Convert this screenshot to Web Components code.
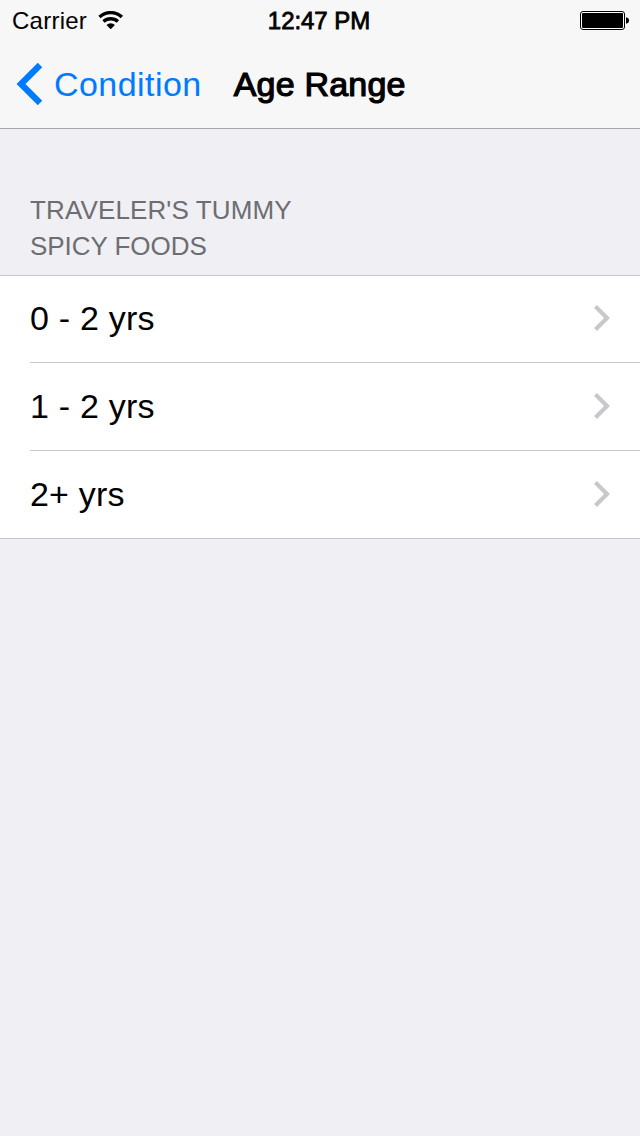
<!DOCTYPE html>
<html lang="en">
<head>
<meta charset="utf-8">
<title>Age Range</title>
<style>
  body {
    margin: 0;
    min-height: 100vh;
    background: #efeff4;
    color: #000;
    font-family: "Liberation Sans", Arial, sans-serif;
  }
  .condition {
    letter-spacing: 0.13px;
  }
  .cause {
    letter-spacing: -0.05px;
  }
</style>
</head>
<body>
  <status-bar carrier="Carrier" time="12:47 PM"></status-bar>
  <nav-bar back="Condition">Age Range</nav-bar>
  <table-section>
    <span slot="header"><span class="condition">TRAVELER'S TUMMY</span><br><span class="cause">SPICY FOODS</span></span>
    <table-row>0 - 2 yrs</table-row>
    <table-row>1 - 2 yrs</table-row>
    <table-row>2+ yrs</table-row>
  </table-section>

<script>
class StatusBar extends HTMLElement {
  connectedCallback() {
    this.attachShadow({ mode: 'open' });
    this.shadowRoot.innerHTML = `
      <style>
        :host {
          display: grid;
          grid-template-columns: 1fr auto 1fr;
          align-items: center;
          height: 40px;
          box-sizing: border-box;
          padding: 2px 11px 0 12px;
          background: #f7f7f7;
          font-size: 24px;
          line-height: 38px;
        }
        .left {
          display: flex;
          align-items: center;
          gap: 11px;
          letter-spacing: 0.25px;
        }
        .time {
          margin-right: 3px;
          letter-spacing: -0.05px;
          -webkit-text-stroke: 0.8px #000;
        }
        .battery {
          justify-self: end;
        }
        svg {
          display: block;
        }
      </style>
      <div class="left">
        <span>${this.getAttribute('carrier')}</span>
        <svg width="26" height="20" viewBox="0 0 26 20">
          <g fill="none" stroke="#000" stroke-width="3.400">
            <path d="M1.500 6a16.500 16.500 0 0 1 22.400 0"/>
            <path d="M5.500 10.500a10.600 10.600 0 0 1 14.400 0"/>
          </g>
          <path d="M8.500 14a6.200 6.200 0 0 1 8.400 0l-4.200 4.200z"/>
        </svg>
      </div>
      <span class="time">${this.getAttribute('time')}</span>
      <svg class="battery" width="49" height="20" viewBox="0 0 49 20">
        <rect x=".5" y=".5" width="44" height="18" rx="2.500" fill="#fff" stroke="#000"/>
        <rect x="2" y="2" width="41" height="15" rx="1"/>
        <path d="M46 6.200c2 .4 3 1.500 3 3.300s-1 2.900-3 3.300z"/>
      </svg>
    `;
  }
}
customElements.define('status-bar', StatusBar);

class NavBar extends HTMLElement {
  connectedCallback() {
    this.attachShadow({ mode: 'open' });
    this.shadowRoot.innerHTML = `
      <style>
        :host {
          display: flex;
          align-items: center;
          height: 89px;
          box-sizing: border-box;
          padding: 0 16px;
          background: #f7f7f7;
          border-bottom: 1px solid #a7a7aa;
          font-size: 34px;
          line-height: 88px;
        }
        .back {
          display: flex;
          align-items: center;
          gap: 11px;
          color: #007aff;
          letter-spacing: 0.45px;
        }
        .title {
          margin-left: 32px;
          letter-spacing: 0.2px;
          -webkit-text-stroke: 1.2px #000;
        }
      </style>
      <div class="back">
        <svg width="27" height="42" viewBox="0 0 27 42">
          <path d="M24 2 5 21l19 19" fill="none" stroke="#007aff" stroke-width="6.300"/>
        </svg>
        <span>${this.getAttribute('back')}</span>
      </div>
      <span class="title"><slot></slot></span>
    `;
  }
}
customElements.define('nav-bar', NavBar);

class TableSection extends HTMLElement {
  connectedCallback() {
    this.attachShadow({ mode: 'open' });
    this.shadowRoot.innerHTML = `
      <style>
        :host {
          display: block;
        }
        .header {
          padding: 63px 30px 11px;
          color: #6d6d72;
          font-size: 26px;
          line-height: 36px;
        }
        .rows {
          background: #fff;
          border-top: 1px solid #c8c7cc;
          border-bottom: 1px solid #c8c7cc;
        }
      </style>
      <div class="header"><slot name="header"></slot></div>
      <div class="rows"><slot></slot></div>
    `;
  }
}
customElements.define('table-section', TableSection);

class TableRow extends HTMLElement {
  connectedCallback() {
    this.attachShadow({ mode: 'open' });
    this.shadowRoot.innerHTML = `
      <style>
        :host {
          display: block;
          padding-left: 30px;
        }
        .row {
          display: flex;
          align-items: center;
          justify-content: space-between;
          height: 84px;
          padding: 0 30px 2px 0;
          border-bottom: 1px solid #c8c7cc;
          font-size: 34px;
          line-height: 84px;
          letter-spacing: 0.2px;
        }
        :host(:not(:first-of-type)) .row {
          height: 85px;
        }
        :host(:last-of-type) .row {
          border-bottom: 0;
        }
      </style>
      <div class="row">
        <slot></slot>
        <svg width="17" height="26" viewBox="0 0 17 26">
          <path d="M2.500 1.500 14 13 2.500 24.500" fill="none" stroke="#c7c7cc" stroke-width="4.200"/>
        </svg>
      </div>
    `;
  }
}
customElements.define('table-row', TableRow);
</script>
</body>
</html>
